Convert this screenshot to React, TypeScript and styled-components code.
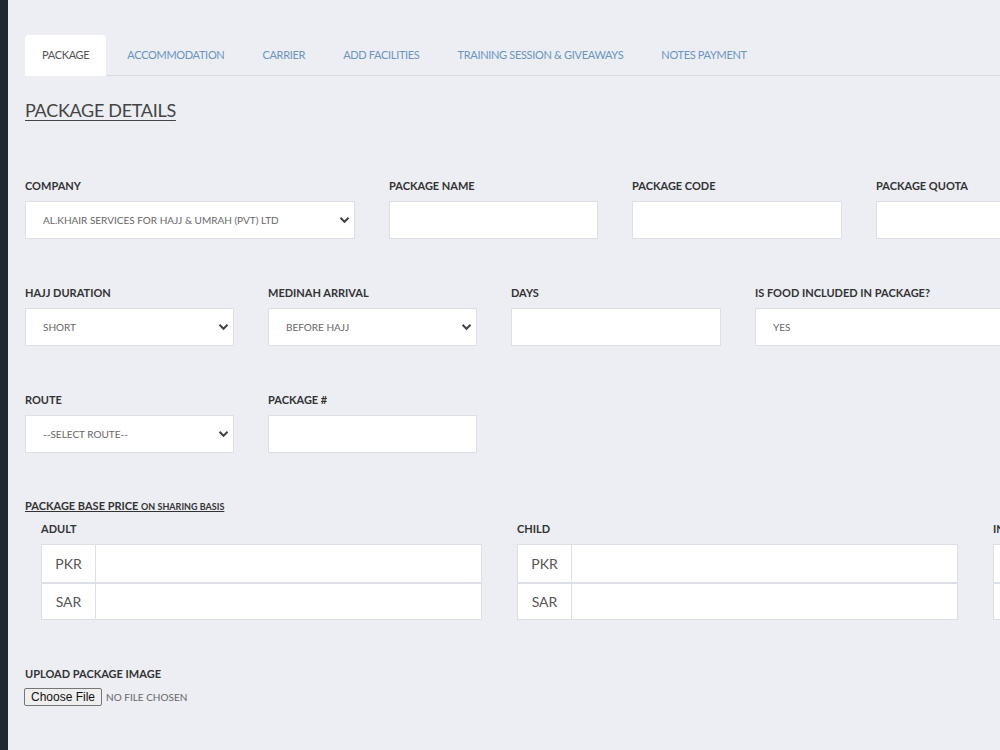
import React from "react";
import styled, { createGlobalStyle } from "styled-components";

const Global = createGlobalStyle`
  html, body { margin: 0; padding: 0; overflow: hidden; }
  body { background: #eceef3; font-family: Lato, "Liberation Sans", sans-serif; }
  * { box-sizing: border-box; }
`;

const Page = styled.div`
  display: flex;
  width: 1000px;
  height: 750px;
  overflow: hidden;
`;

const Sidebar = styled.div`
  width: 8px;
  flex: 0 0 8px;
  background: #1e2930;
`;

const Main = styled.div`
  flex: 1;
  padding: 35px 0 0 17px;
  min-width: 0;
`;

const TabBar = styled.div`
  display: flex;
  height: 41px;
  border-bottom: 1px solid #d8dbe1;
  width: 1200px;
`;

const Tab = styled.div<{ $active?: boolean }>`
  padding: 0 17px;
  margin-right: 4px;
  line-height: 40px;
  font-size: 11px;
  letter-spacing: -0.32px;
  white-space: nowrap;
  color: ${(p) => (p.$active ? "#555" : "#6b94bf")};
  background: ${(p) => (p.$active ? "#fff" : "transparent")};
  border-radius: 4px 4px 0 0;
  margin-bottom: -1px;
  height: 41px;
`;

const Heading = styled.h2`
  margin: 22px 0 0;
  font-size: 18px;
  letter-spacing: -0.3px;
  font-weight: 400;
  line-height: 24px;
  color: #444;
  text-decoration: underline;
  text-underline-offset: 3px;
`;

const Row = styled.div<{ $top: number }>`
  display: flex;
  gap: 34px;
  margin-top: ${(p) => p.$top}px;
  width: 1400px;
`;

const Field = styled.div<{ $w: number }>`
  width: ${(p) => p.$w}px;
  flex: 0 0 ${(p) => p.$w}px;
`;

const Label = styled.div`
  font-size: 11px;
  font-weight: 700;
  line-height: 14px;
  color: #333;
  margin-bottom: 8px;
  white-space: nowrap;
`;

const Box = styled.div`
  height: 38px;
  background: #fff;
  border: 1px solid #dcdfe5;
  display: flex;
  align-items: center;
  padding: 0 4px 0 17px;
  font-size: 10px;
  color: #666;
  white-space: nowrap;
`;

const BoxText = styled.span`
  flex: 1;
`;

const Chevron = () => (
  <svg width="11" height="8" viewBox="0 0 11 8">
    <path d="M1.5 1.8 L5.5 5.8 L9.5 1.8" fill="none" stroke="#444" strokeWidth="2" />
  </svg>
);

const Select = ({ value }: { value: string }) => (
  <Box>
    <BoxText>{value}</BoxText>
    <Chevron />
  </Box>
);

const PriceTitle = styled.div`
  margin-top: 46px;
  font-size: 11px;
  font-weight: 700;
  color: #333;
  text-decoration: underline;
  line-height: 14px;
`;

const Small = styled.span`
  font-size: 9px;
`;

const PriceGroups = styled.div`
  display: flex;
  gap: 35px;
  padding-left: 16px;
  margin-top: 8px;
  width: 1600px;
`;

const PriceGroup = styled.div`
  width: 441px;
  flex: 0 0 441px;
`;

const PriceTable = styled.div`
  border: 1px solid #dcdfe5;
  background: #fff;
`;

const PriceRow = styled.div`
  display: flex;
  height: 37px;
  & + & {
    border-top: 2px solid #dcdfe5;
  }
`;

const Addon = styled.div`
  width: 54px;
  border-right: 1px solid #dcdfe5;
  display: flex;
  align-items: center;
  justify-content: center;
  font-size: 14px;
  color: #555;
`;

const Upload = styled.div`
  margin-top: 47px;
`;

const UploadLabel = styled(Label)`
  margin-bottom: 7px;
`;

const FileRow = styled.div`
  display: flex;
  align-items: center;
  gap: 4px;
  margin-left: -1px;
`;

const FileButton = styled.button`
  font-family: "Liberation Sans", Arial, sans-serif;
  font-size: 12px;
  height: 18px;
  padding: 0 6px;
  border: 1px solid #767676;
  border-radius: 2px;
  background: #efefef;
  color: #111;
`;

const FileText = styled.span`
  font-size: 10px;
  color: #666;
`;

const tabs = [
  "PACKAGE",
  "ACCOMMODATION",
  "CARRIER",
  "ADD FACILITIES",
  "TRAINING SESSION & GIVEAWAYS",
  "NOTES PAYMENT",
];

const priceGroups = ["ADULT", "CHILD", "INFANT"];

export default function App() {
  return (
    <>
      <Global />
      <Page>
        <Sidebar />
        <Main>
          <TabBar>
            {tabs.map((t, i) => (
              <Tab key={t} $active={i === 0}>
                {t}
              </Tab>
            ))}
          </TabBar>
          <Heading>PACKAGE DETAILS</Heading>

          <Row $top={57}>
            <Field $w={330}>
              <Label>COMPANY</Label>
              <Select value="AL.KHAIR SERVICES FOR HAJJ & UMRAH (PVT) LTD" />
            </Field>
            <Field $w={209}>
              <Label>PACKAGE NAME</Label>
              <Box />
            </Field>
            <Field $w={210}>
              <Label>PACKAGE CODE</Label>
              <Box />
            </Field>
            <Field $w={209}>
              <Label>PACKAGE QUOTA</Label>
              <Box />
            </Field>
          </Row>

          <Row $top={47}>
            <Field $w={209}>
              <Label>HAJJ DURATION</Label>
              <Select value="SHORT" />
            </Field>
            <Field $w={209}>
              <Label>MEDINAH ARRIVAL</Label>
              <Select value="BEFORE HAJJ" />
            </Field>
            <Field $w={210}>
              <Label>DAYS</Label>
              <Box />
            </Field>
            <Field $w={330}>
              <Label>IS FOOD INCLUDED IN PACKAGE?</Label>
              <Box>YES</Box>
            </Field>
          </Row>

          <Row $top={47}>
            <Field $w={209}>
              <Label>ROUTE</Label>
              <Select value="--SELECT ROUTE--" />
            </Field>
            <Field $w={209}>
              <Label>PACKAGE #</Label>
              <Box />
            </Field>
          </Row>

          <PriceTitle>
            PACKAGE BASE PRICE <Small>ON SHARING BASIS</Small>
          </PriceTitle>
          <PriceGroups>
            {priceGroups.map((g) => (
              <PriceGroup key={g}>
                <Label>{g}</Label>
                <PriceTable>
                  <PriceRow>
                    <Addon>PKR</Addon>
                  </PriceRow>
                  <PriceRow>
                    <Addon>SAR</Addon>
                  </PriceRow>
                </PriceTable>
              </PriceGroup>
            ))}
          </PriceGroups>

          <Upload>
            <UploadLabel>UPLOAD PACKAGE IMAGE</UploadLabel>
            <FileRow>
              <FileButton>Choose File</FileButton>
              <FileText>NO FILE CHOSEN</FileText>
            </FileRow>
          </Upload>
        </Main>
      </Page>
    </>
  );
}
